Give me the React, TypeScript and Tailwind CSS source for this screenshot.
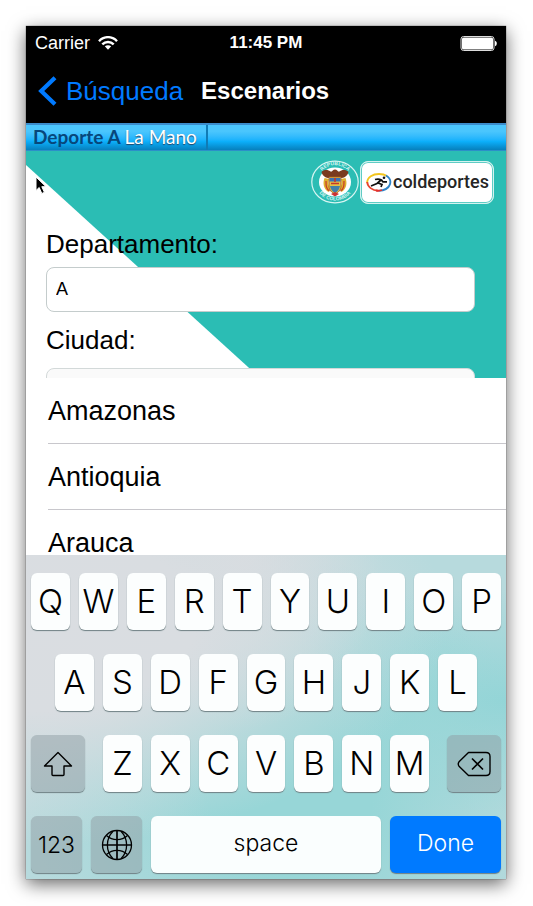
import { useState } from "react";

const letterKey =
  "h-[57px] min-w-0 flex-1 rounded-[6px] bg-[#fcfefe] shadow-[0_1px_1px_#6f8084] font-['Inter',sans-serif] text-[33px] leading-[57px] font-light text-black";
const grayKey =
  "flex h-[57px] items-center justify-center rounded-[6px] bg-[#8f9ea3]/50 shadow-[0_1px_1px_#6f8084] text-black";

function StatusBar() {
  return (
    <div className="grid grid-cols-3 items-center pt-[6px] pr-[9px] pl-[9px] text-[18px] leading-[22px] text-white">
      <div className="flex items-center gap-[8px]">
        <span>Carrier</span>
        <svg width="20" height="14" viewBox="0 0 20 14" fill="none" stroke="#fff" strokeWidth="2.4" aria-label="Wi-Fi">
          <path d="M1 5.2C6-.2 14-.2 19 5.2" />
          <path d="M4.3 8.4c3.2-3.3 8.2-3.3 11.4 0" />
          <path d="M6.8 10.3c1.8-1.5 4.6-1.5 6.4 0L10 13.8z" fill="#fff" stroke="none" />
        </svg>
      </div>
      <span className="text-center text-[17px] font-bold whitespace-nowrap">11:45 PM</span>
      <svg className="justify-self-end" width="37" height="15" viewBox="0 0 37 15" aria-label="Battery">
        <rect x="1" y="0.5" width="33" height="14" rx="2.5" fill="none" stroke="#ddd" />
        <rect x="2" y="1.5" width="31" height="12" rx="1.5" fill="#fff" />
        <path d="M35 4.8c2.4.7 2.4 4.7 0 5.4z" fill="#fff" />
      </svg>
    </div>
  );
}

function NavBar() {
  return (
    <div className="flex h-[69px] items-center gap-[18px] pt-[4px] pl-[12px]">
      <button className="flex items-center gap-[9px] text-[26px] leading-[32px] text-[#007aff]">
        <svg width="19" height="30" viewBox="0 0 19 30" fill="none" stroke="#007aff" strokeWidth="4.2" aria-hidden="true">
          <path d="M17 1.7 3.2 15 17 28.3" />
        </svg>
        Búsqueda
      </button>
      <h1 className="text-[24px] leading-[32px] font-bold text-white">Escenarios</h1>
    </div>
  );
}

function Emblem() {
  return (
    <svg width="48" height="44" viewBox="0 0 48 44" aria-label="República de Colombia">
      <defs>
        <path id="arcTop" d="M7.500 21a16.500 15.800 0 0 1 33 0" />
        <path id="arcBottom" d="M4.500 22a19.500 18.500 0 0 0 39 0" />
      </defs>
      <ellipse cx="24" cy="22" rx="23.200" ry="20.800" fill="#2bbdb4" stroke="#d8f5f2" strokeWidth="1.200" />
      <text fontSize="5" fontWeight="700" fill="#d8f5f2" textAnchor="middle">
        <textPath href="#arcTop" startOffset="50%">REPÚBLICA</textPath>
      </text>
      <text fontSize="5" fontWeight="700" fill="#d8f5f2" textAnchor="middle">
        <textPath href="#arcBottom" startOffset="50%">DE COLOMBIA</textPath>
      </text>
      <ellipse cx="24" cy="22" rx="16" ry="14.500" fill="#fff" />
      <path d="M24 9.500c-2 0-2.500 2-4 2.300-3-2.300-7-2.300-9.500.2 1 4 4 5.500 6.500 6l7-1 7 1c2.500-.5 5.500-2 6.500-6-2.500-2.500-6.500-2.500-9.500-.2-1.500-.3-2-2.300-4-2.300z" fill="#7a3a20" />
      <path d="M13.500 18c-2 5-1 11 4 14l2-3c-2.500-3-2.500-7-1.500-10zM34.500 18c2 5 1 11-4 14l-2-3c2.500-3 2.500-7 1.500-10z" fill="#dfae2c" />
      <path d="M15 21c0 4.500 0 8 3.500 10M33 21c0 4.500 0 8-3.500 10" stroke="#c63b2b" strokeWidth="1.200" fill="none" />
      <path d="M18 17h12v9c0 4-3 7-6 8-3-1-6-4-6-8z" fill="#e6bf45" stroke="#a4571f" strokeWidth=".8" />
      <path d="M18.500 18h11v3.500h-11z" fill="#3a72b5" />
      <path d="M19 26h10c-.5 3.500-3 6-5 7-2-1-4.500-3.500-5-7z" fill="#447fa8" />
      <path d="M20 23.500h8M24 18v4" stroke="#c8362a" strokeWidth="1.600" />
      <path d="M20 34l4-2 4 2-4 2.500z" fill="#c33" />
    </svg>
  );
}

function Coldeportes() {
  return (
    <div className="flex h-[43px] w-[134px] items-center gap-[1px] rounded-[8px] border border-[#d5f3f0] bg-white pl-[5px] shadow-[inset_0_0_0_1px_#5fccc5]">
      <svg className="shrink-0" width="26" height="19" viewBox="0 0 26 19" fill="none" aria-hidden="true">
        <path d="M1.200 10C1 4 7 1 13 1c3 0 6 .7 8 2" stroke="#f3c51d" strokeWidth="1.800" />
        <path d="M1.200 9c.3 5 5 8.500 11 8.700" stroke="#e8432e" strokeWidth="1.800" />
        <path d="M20 2.500c7 4 6 14.500-7.500 15.300" stroke="#2e83c8" strokeWidth="1.800" />
        <path d="M10 17.500c2 .4 4 .3 6-.5" stroke="#e22f2f" strokeWidth="1.800" />
        <circle cx="18" cy="4.800" r="1.300" fill="#111" />
        <path d="M9 6.500c2.500-.8 4.500-.6 6.500.4l1.500 2h4M15 7l-4 3.500-6 2.500M12 10l4 1.500-1 2.500" stroke="#111" strokeWidth="1.700" />
      </svg>
      <span className="font-['Roboto',sans-serif] text-[18px] leading-[24px] font-medium text-[#252525]">coldeportes</span>
    </div>
  );
}

function SearchForm({ value, onChange }: { value: string; onChange: (v: string) => void }) {
  return (
    <section className="relative h-[227px] overflow-hidden bg-[#2bbdb4]">
      <svg className="absolute top-[14px] left-0" width="234" height="213" viewBox="0 0 234 213" aria-hidden="true">
        <path d="M0 0 234 213H0z" fill="#fff" />
      </svg>
      <div className="relative flex flex-col pt-[9px] pl-[20px]">
        <div className="flex items-center justify-end gap-[1px] pr-[12px]">
          <Emblem />
          <Coldeportes />
        </div>
        <div className="flex flex-col pr-[31px]">
          <label htmlFor="departamento" className="mt-[20px] text-[26px] leading-[40px] text-black">
            Departamento:
          </label>
          <input
            id="departamento"
            value={value}
            onChange={(e) => onChange(e.target.value)}
            className="mt-[3px] h-[45px] rounded-[8px] border border-[#c4cccc] bg-white px-[9px] text-[18px] text-black outline-none"
          />
          <label htmlFor="ciudad" className="mt-[8px] text-[26px] leading-[40px] text-black">
            Ciudad:
          </label>
          <input id="ciudad" className="mt-[8px] h-[45px] rounded-[8px] border border-[#d3d9d9] bg-[#fafafa] px-[9px] text-[18px]" />
        </div>
      </div>
      <svg className="absolute top-[25px] left-[9px]" width="14" height="20" viewBox="0 0 14 20" aria-hidden="true">
        <path d="M1 1v13.500l3.200-3 2.600 6 2.600-1.200-2.600-5.600H11z" fill="#000" stroke="#fff" strokeWidth="1" />
      </svg>
    </section>
  );
}

function Suggestions({ onPick }: { onPick: (v: string) => void }) {
  return (
    <ul className="h-[177px] overflow-hidden bg-white pl-[22px]">
      {["Amazonas", "Antioquia", "Arauca"].map((name) => (
        <li key={name} className="border-b border-[#c8c7cc]">
          <button onClick={() => onPick(name)} className="block h-[65px] w-full text-left text-[27px] leading-[67px] text-black">
            {name}
          </button>
        </li>
      ))}
    </ul>
  );
}

function Letters({ row }: { row: string }) {
  return (
    <>
      {row.split("").map((l) => (
        <button key={l} className={letterKey}>
          {l}
        </button>
      ))}
    </>
  );
}

function Keyboard() {
  return (
    <div className="flex flex-col gap-[24px] bg-[#b7dadd] bg-[radial-gradient(ellipse_at_0%_20%,#dadde1_0%,#d9dde1_25%,#d5dce200_62%),radial-gradient(ellipse_at_45%_0%,#d6dbdf_0%,#d6dbdf00_38%),radial-gradient(ellipse_at_55%_75%,#97d6d7_0%,#97d6d7_22%,#97d6d700_70%),radial-gradient(ellipse_at_100%_45%,#93d5d7_0%,#93d5d700_45%)] px-[5px] pt-[18px] pb-[6px]">
      <div className="flex gap-[9px]">
        <Letters row="QWERTYUIOP" />
      </div>
      <div className="flex gap-[9px] px-[24px]">
        <Letters row="ASDFGHJKL" />
      </div>
      <div className="flex gap-[18px]">
        <button aria-label="Shift" className={`${grayKey} w-[54px]`}>
          <svg width="30" height="26" viewBox="0 0 30 26" fill="none" stroke="#000" strokeWidth="1.4" strokeLinejoin="round">
            <path d="M15 1.500 1.500 15H9v8.500q0 1 1 1h10q1 0 1-1V15h7.500z" />
          </svg>
        </button>
        <div className="flex flex-1 gap-[9px]">
          <Letters row="ZXCVBNM" />
        </div>
        <button aria-label="Delete" className={`${grayKey} w-[54px]`}>
          <svg width="34" height="26" viewBox="0 0 34 26" fill="none" stroke="#000" strokeWidth="1.400" strokeLinejoin="round">
            <path d="M11.500 1.500H29q4 0 4 4v15q0 4-4 4H11.500L2 15.200Q.5 13 2 10.800z" />
            <path d="m15 7.500 11 11m0-11-11 11" strokeWidth="1.700" />
          </svg>
        </button>
      </div>
      <div className="flex gap-[9px] font-['Inter',sans-serif] text-[23px] font-light">
        <button className={`${grayKey} w-[51px] pt-[2px]`}>123</button>
        <button aria-label="Next keyboard" className={`${grayKey} w-[51px]`}>
          <svg width="32" height="32" viewBox="0 0 32 32" fill="none" stroke="#000" strokeWidth="1.300">
            <circle cx="16" cy="16" r="14.500" />
            <path d="M16 1.500v29M1.500 16h29" strokeWidth="1.700" />
            <path d="M12 2.200C4.500 10 4.500 22 12 29.800M20 2.200c7.500 7.800 7.500 19.800 0 27.600" />
            <path d="M5.500 6.500c6 5.500 15 5.500 21 0M5.500 25.500c6-5.500 15-5.500 21 0" />
          </svg>
        </button>
        <button className="h-[57px] flex-1 rounded-[6px] bg-[#fafefe] pb-[2px] text-black shadow-[0_1px_1px_#6f8084]">space</button>
        <button className="h-[57px] w-[111px] rounded-[6px] bg-[#007aff] pb-[2px] text-white shadow-[0_1px_1px_#6f8084]">Done</button>
      </div>
    </div>
  );
}

export default function App() {
  const [department, setDepartment] = useState("A");
  return (
    <div className="bg-white pt-[26px] pr-[27px] pb-[27px] pl-[26px] font-['Liberation_Sans',Arial,sans-serif]">
      <main className="bg-black shadow-[0_0_1px_#333,0_5px_17px_rgba(0,0,0,0.6)]">
        <StatusBar />
        <NavBar />
        <div className="flex h-[28px] border-t-2 border-b border-t-[#3b8ccb] border-b-[#2c8fc9] bg-linear-to-b from-[#4bc6fd] from-25% via-[#0cb0fc] via-65% to-[#0780bd]">
          <div className="border-r-2 border-[#107bb5] pr-[9px] pl-[7px] font-['Lato',sans-serif] text-[19px] leading-[24px] font-bold text-white">
            <span className="text-[#07477b]">Deporte A</span>{" "}
            <span className="font-normal text-shadow-[0_1px_1px_#246]">La Mano</span>
          </div>
        </div>
        <SearchForm value={department} onChange={setDepartment} />
        <Suggestions onPick={setDepartment} />
        <Keyboard />
      </main>
    </div>
  );
}
